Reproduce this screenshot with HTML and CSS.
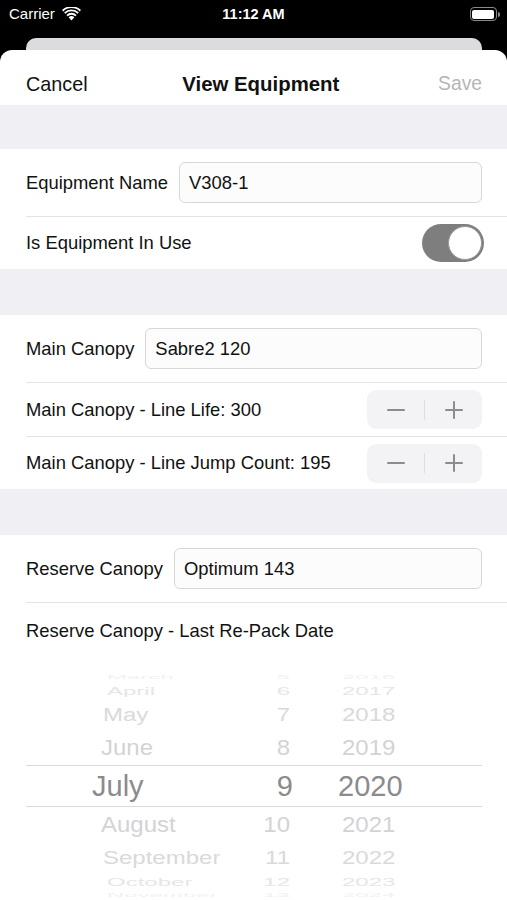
FILE: index.html
```html
<!DOCTYPE html>
<html lang="en">
<head>
    <meta charset="UTF-8">
    <meta name="viewport" content="width=device-width, initial-scale=1.0">
    <title>View Equipment</title>
    <link rel="stylesheet" href="styles.css">
</head>
<body>
    <div class="statusbar">
        <div class="status-left">
            <span>Carrier</span>
            <svg class="wifi" width="19" height="14" viewBox="0 0 19 14">
                <path d="M9.5 13.5 L6.6 10.3 A4.2 4.2 0 0 1 12.4 10.3 Z" fill="#fff"/>
                <path d="M4.4 7.9 A7.4 7.4 0 0 1 14.6 7.9 L13.3 9.3 A5.5 5.5 0 0 0 5.7 9.3 Z" fill="#fff"/>
                <path d="M2.1 5.4 A10.7 10.7 0 0 1 16.9 5.4 L15.6 6.8 A8.8 8.8 0 0 0 3.4 6.8 Z" fill="#fff"/>
                <path d="M0 3 A13.8 13.8 0 0 1 19 3 L17.7 4.4 A11.9 11.9 0 0 0 1.3 4.4 Z" fill="#fff"/>
            </svg>
        </div>
        <div class="status-time">11:12 AM</div>
        <div class="status-right">
            <div class="battery"><div class="battery-level"></div></div>
            <div class="battery-nub"></div>
        </div>
    </div>

    <div class="backcard"></div>

    <div class="sheet">
        <div class="navbar">
            <span class="nav-btn">Cancel</span>
            <span class="nav-title">View Equipment</span>
            <span class="nav-btn disabled">Save</span>
        </div>

        <div class="gap first"></div>

        <div class="group">
            <div class="row field-row">
                <span class="label">Equipment Name</span>
                <div class="textfield">V308-1</div>
            </div>
            <div class="row short last">
                <span class="label">Is Equipment In Use</span>
                <div class="toggle"><div class="knob"></div></div>
            </div>
        </div>

        <div class="gap"></div>

        <div class="group">
            <div class="row field-row">
                <span class="label">Main Canopy</span>
                <div class="textfield">Sabre2 120</div>
            </div>
            <div class="row short">
                <span class="label">Main Canopy - Line Life: 300</span>
                <div class="stepper">
                    <span class="step-btn"><span class="minus"></span></span>
                    <span class="step-div"></span>
                    <span class="step-btn"><span class="plus"></span></span>
                </div>
            </div>
            <div class="row short last">
                <span class="label">Main Canopy - Line Jump Count: 195</span>
                <div class="stepper">
                    <span class="step-btn"><span class="minus"></span></span>
                    <span class="step-div"></span>
                    <span class="step-btn"><span class="plus"></span></span>
                </div>
            </div>
        </div>

        <div class="gap"></div>

        <div class="group">
            <div class="row field-row">
                <span class="label">Reserve Canopy</span>
                <div class="textfield">Optimum 143</div>
            </div>
            <div class="row date-row last">
                <span class="label">Reserve Canopy - Last Re-Pack Date</span>
            </div>
            <div class="picker">
                <div class="prow r1"><span class="m">March</span><span class="d">5</span><span class="y">2016</span></div>
                <div class="prow r2"><span class="m">April</span><span class="d">6</span><span class="y">2017</span></div>
                <div class="prow r3"><span class="m">May</span><span class="d">7</span><span class="y">2018</span></div>
                <div class="prow r4"><span class="m">June</span><span class="d">8</span><span class="y">2019</span></div>
                <div class="prow selected"><span class="m">July</span><span class="d">9</span><span class="y">2020</span></div>
                <div class="prow r4"><span class="m">August</span><span class="d">10</span><span class="y">2021</span></div>
                <div class="prow r3"><span class="m">September</span><span class="d">11</span><span class="y">2022</span></div>
                <div class="prow r2"><span class="m">October</span><span class="d">12</span><span class="y">2023</span></div>
                <div class="prow r1"><span class="m">November</span><span class="d">13</span><span class="y">2024</span></div>
            </div>
        </div>
    </div>
</body>
</html>
```

FILE: styles.css
```css
* {
    box-sizing: border-box;
}

body {
    margin: 0;
    background-color: #000;
    font-family: "Liberation Sans", Arial, sans-serif;
    color: #111;
    overflow: hidden;
}

/* status bar */
.statusbar {
    height: 38px;
    display: flex;
    justify-content: space-between;
    align-items: flex-start;
    padding: 5px 7px 0 9px;
    color: #fff;
    font-size: 15px;
    line-height: 18px;
}

.status-left {
    display: flex;
    align-items: center;
    gap: 7px;
    width: 120px;
}

.wifi {
    margin-top: -1px;
}

.status-time {
    font-weight: bold;
    font-size: 14.5px;
    padding-right: 2px;
}

.status-right {
    width: 120px;
    display: flex;
    justify-content: flex-end;
    align-items: center;
    padding-top: 2px;
}

.battery {
    width: 27px;
    height: 14px;
    border: 1.5px solid #8a8a8a;
    border-radius: 4px;
    padding: 1.5px;
}

.battery-level {
    width: 100%;
    height: 100%;
    background-color: #fff;
    border-radius: 2px;
}

.battery-nub {
    width: 2px;
    height: 5px;
    background-color: #8a8a8a;
    border-radius: 0 2px 2px 0;
    margin-left: 1px;
}

.backcard {
    height: 12px;
    margin: 0 25px 0 26px;
    background-color: #dcdcdf;
    border-radius: 10px 10px 0 0;
}

.sheet {
    background-color: #fff;
    border-radius: 12px 12px 0 0;
    height: 850px;
}

/* nav */
.navbar {
    height: 55px;
    padding: 13px 25px 0 26px;
    display: flex;
    justify-content: space-between;
    align-items: center;
}

.nav-btn {
    font-size: 19.8px;
    color: #111;
}

.nav-btn.disabled {
    color: #b5b5b8;
    font-size: 19.3px;
}

.nav-title {
    font-size: 20.4px;
    font-weight: bold;
    margin-left: -4px;
}

.gap {
    height: 46px;
    background-color: #f0f0f4;
}

.gap.first {
    height: 44px;
}

/* rows */
.row {
    margin-left: 26px;
    padding-right: 25px;
    display: flex;
    align-items: center;
    justify-content: space-between;
    border-bottom: 1px solid #e3e3e6;
    font-size: 18.4px;
}

.row.last {
    border-bottom: none;
}

.field-row {
    height: 68px;
    gap: 11px;
}

.short {
    height: 54px;
}

.short.last {
    height: 52px;
}

.date-row {
    height: 56px;
}

.label {
    white-space: nowrap;
    color: #111;
}

.textfield {
    flex: 1;
    height: 41px;
    border: 1px solid #d7d7da;
    border-radius: 6px;
    background-color: #fcfcfc;
    padding-left: 9px;
    display: flex;
    align-items: center;
    font-size: 18.4px;
    color: #111;
}

/* toggle */
.toggle {
    width: 62px;
    height: 38px;
    border-radius: 19px;
    background-color: #7e7e7e;
    padding: 2px;
    display: flex;
    justify-content: flex-end;
    margin-right: -2px;
}

.knob {
    width: 34px;
    height: 34px;
    border-radius: 50%;
    background-color: #fff;
    border: 1px solid #9a9a9a;
}

/* stepper */
.stepper {
    width: 115px;
    height: 39px;
    border-radius: 9px;
    background-color: #f3f3f6;
    display: flex;
    align-items: center;
}

.step-btn {
    flex: 1;
    height: 100%;
    display: flex;
    align-items: center;
    justify-content: center;
    position: relative;
}

.step-div {
    width: 1px;
    height: 20px;
    background-color: #dedee2;
}

.minus,
.plus {
    display: block;
    width: 18px;
    height: 18px;
    position: relative;
}

.minus::before,
.plus::before,
.plus::after {
    content: "";
    position: absolute;
    background-color: #8c8c8c;
    border-radius: 1px;
}

.minus::before,
.plus::before {
    left: 0;
    top: 8px;
    width: 18px;
    height: 2px;
}

.plus::after {
    left: 8px;
    top: 0;
    width: 2px;
    height: 18px;
}

/* date picker */
.picker {
    margin: 13px 25px 0 26px;
}

.prow {
    display: grid;
    grid-template-columns: 150px 39px 1fr;
    padding-left: 75px;
    font-size: 24px;
    white-space: nowrap;
    color: #d3d3d5;
}

.prow .d {
    text-align: right;
}

.prow .y {
    padding-left: 52px;
}

.prow span {
    display: block;
}

.r1 {
    height: 10px;
    line-height: 10px;
    color: #f1f1f2;
}

.r1 span {
    transform: scaleY(0.25);
}

.r1 .m {
    padding-left: 6px;
}

.r2 {
    height: 17px;
    line-height: 17px;
    color: #e6e6e8;
}

.r2 span {
    transform: scaleY(0.48);
}

.r2 .m {
    padding-left: 6px;
}

.r3 {
    height: 31px;
    line-height: 31px;
    color: #d9d9db;
}

.r3 span {
    transform: scaleY(0.76);
}

.r3 .m {
    padding-left: 2px;
}

.r4 {
    height: 35px;
    line-height: 35px;
    color: #d3d3d5;
}

.r4 span {
    transform: scaleY(0.94);
}

.selected {
    height: 42px;
    line-height: 40px;
    font-size: 29px;
    color: #8b8b8d;
    border-top: 1px solid #dadadc;
    border-bottom: 1px solid #dadadc;
    grid-template-columns: 159px 42px 1fr;
    padding-left: 66px;
}

.selected .y {
    padding-left: 45px;
}
```
